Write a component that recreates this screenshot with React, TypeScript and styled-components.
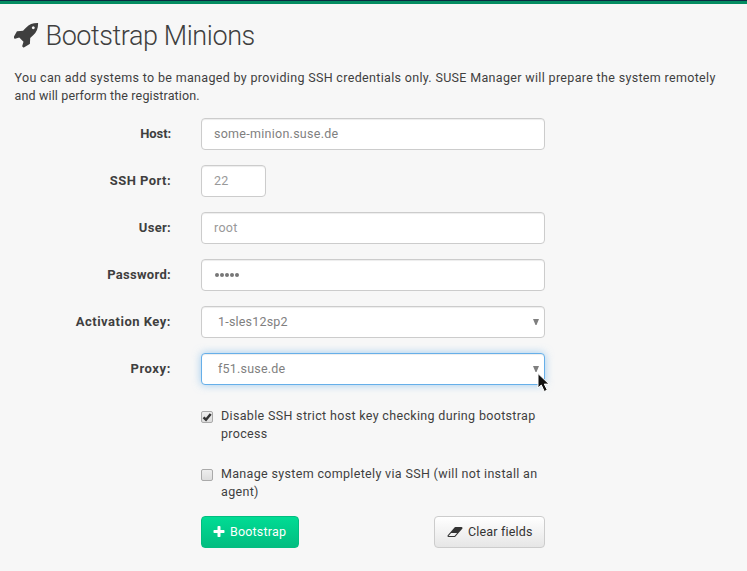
import React from 'react';
import styled, { createGlobalStyle, css } from 'styled-components';

const GlobalStyle = createGlobalStyle`
  * { box-sizing: border-box; }
  body {
    margin: 0;
    background: #f7f7f7;
    color: #3f3f3f;
    font: 12.5px/18px Roboto, "Liberation Sans", sans-serif;
    letter-spacing: 0.33px;
  }
`;

const Page = styled.div`
  position: relative;
  height: 571px;
  overflow: hidden;
  border-top: 1px solid #0b2c42;
`;
const Accent = styled.div`
  height: 3px;
  background: #048d62;
`;
const Content = styled.main`
  padding: 16px 14px 0;
`;
const Icon = styled.svg<{ $w: number; $h: number }>`
  display: block;
  flex: none;
  width: ${p => p.$w}px;
  height: ${p => p.$h}px;
  fill: currentColor;
`;
const Title = styled.h1`
  display: flex;
  align-items: center;
  gap: 4.5px;
  height: 30px;
  margin: 0 0 19px;
  padding-top: 1px;
  font-size: 27px;
  line-height: 30px;
  font-weight: 300;
  letter-spacing: -0.42px;
  ${Icon} { margin-top: -2px; }
`;
const Intro = styled.p`
  margin: 0 0 13px;
  padding-left: 0.5px;
  white-space: nowrap;
`;
const Tight = styled.span`
  letter-spacing: 0.14px;
`;
const Form = styled.form`
  display: grid;
  row-gap: 15px;
`;
const Row = styled.div`
  display: grid;
  grid-template-columns: 157px 344px;
  column-gap: 30px;
  align-items: center;
`;
const Label = styled.label<{ $track?: number }>`
  text-align: right;
  font-size: 13px;
  font-weight: 700;
  letter-spacing: ${p => p.$track ?? 0.3}px;
`;
const field = css`
  height: 32px;
  border: 1px solid #cccccc;
  border-radius: 4px;
  background: #fff;
  box-shadow: inset 0 1px 1px rgba(0, 0, 0, 0.075);
  font: inherit;
  letter-spacing: 0.27px;
  color: #7f7f7f;
`;
const Input = styled.input<{ $short?: boolean }>`
  ${field}
  width: ${p => (p.$short ? 65 : 344)}px;
  padding: 0 12px 1px;
  outline: none;
  &::placeholder { color: #999; opacity: 1; }
`;
const Dots = styled.div`
  ${field}
  display: flex;
  align-items: center;
  gap: 1px;
  padding: 0 13px;
`;
const Dot = styled.i`
  width: 4px;
  height: 4px;
  border-radius: 50%;
  background: #777;
`;
const Select = styled.div<{ $focus?: boolean }>`
  ${field}
  letter-spacing: 0.2px;
  display: flex;
  align-items: center;
  justify-content: space-between;
  padding: 0 5px 0 16px;
  ${p => p.$focus && css`
    border-color: #66afe9;
    box-shadow: inset 0 1px 1px rgba(0, 0, 0, 0.075), 0 0 8px rgba(102, 175, 233, 0.6);
  `}
`;
const Options = styled.div`
  width: 344px;
  margin: 22px 0 0 187px;
`;
const Check = styled.label`
  display: flex;
  gap: 8px;
  height: 36px;
  margin-bottom: 22px;
  white-space: nowrap;
`;
const Box = styled.span`
  display: grid;
  flex: none;
  place-items: center;
  width: 12px;
  height: 12px;
  margin-top: 4px;
  border: 1px solid #aaa;
  border-radius: 2px;
  background: linear-gradient(#eee, #ddd);
`;
const Actions = styled.div`
  display: flex;
  justify-content: space-between;
  margin-top: -7px;
`;
const Button = styled.button<{ $primary?: boolean }>`
  display: flex;
  align-items: center;
  gap: ${p => (p.$primary ? 4 : 5)}px;
  height: 32px;
  width: ${p => (p.$primary ? 98 : 111)}px;
  padding: 0 0 0 ${p => (p.$primary ? 10 : 12)}px;
  border: 1px solid ${p => (p.$primary ? '#02bd80' : '#ccc')};
  border-radius: 4px;
  background: ${p => (p.$primary ? 'linear-gradient(#00dc94, #02bd80)' : 'linear-gradient(#fff, #e6e6e6)')};
  color: ${p => (p.$primary ? '#fff' : '#333')};
  font: inherit;
  letter-spacing: 0.18px;
  white-space: nowrap;
`;
const Pointer = styled.svg`
  position: absolute;
  left: 537px;
  top: 371px;
`;

const Arrow = () => (
  <Icon $w={6} $h={6} viewBox="0 0 6 6"><path d="M0 0h6L3.5 6h-1z" /></Icon>
);

export default function App() {
  return (
    <Page>
      <GlobalStyle />
      <Accent />
      <Content>
        <Title>
          <Icon $w={27} $h={27} viewBox="64 0 1792 1792">
            <path d="M1440 448q0-40-28-68t-68-28-68 28-28 68 28 68 68 28 68-28 28-68zm224-288q0 249-75.500 430.500t-253.500 360.500q-81 80-195 176l-20 379q-2 16-16 26l-384 224q-7 4-16 4-12 0-23-9l-64-64q-13-14-8-32l85-276-281-281-276 85q-3 1-9 1-14 0-23-9l-64-64q-17-19-5-39l224-384q10-14 26-16l379-20q96-114 176-195 188-187 358-258t431-71q14 0 24 9.500t10 22.500z" />
          </Icon>
          Bootstrap Minions
        </Title>
        <Intro>
          You can add systems to be managed by providing SSH credentials only. SUSE Manager will prepare the system remotely
          <br /><Tight>and will perform the registration.</Tight>
        </Intro>
        <Form>
          <Row><Label $track={-0.1}>Host:</Label><Input defaultValue="some-minion.suse.de" /></Row>
          <Row><Label $track={0.45}>SSH Port:</Label><Input $short placeholder="22" /></Row>
          <Row><Label>User:</Label><Input placeholder="root" /></Row>
          <Row><Label>Password:</Label><Dots>{[0, 1, 2, 3, 4].map(i => <Dot key={i} />)}</Dots></Row>
          <Row><Label $track={0.5}>Activation Key:</Label><Select>1-sles12sp2<Arrow /></Select></Row>
          <Row><Label $track={0.6}>Proxy:</Label><Select $focus>f51.suse.de<Arrow /></Select></Row>
        </Form>
        <Options>
          <Check>
            <Box>
              <svg width="10" height="10" viewBox="0 0 10 10"><path d="M1.500 5.300 4 7.700 8.700 2" fill="none" stroke="#333" strokeWidth="2.500" /></svg>
            </Box>
            <span>Disable SSH strict host key checking during bootstrap<br />process</span>
          </Check>
          <Check>
            <Box />
            <span>Manage system completely via SSH (will not install an<br />agent)</span>
          </Check>
          <Actions>
            <Button $primary type="button">
              <Icon $w={14} $h={14} viewBox="0 0 1792 1792"><path d="M1600 736v192q0 40-28 68t-68 28h-416v416q0 40-28 68t-68 28h-192q-40 0-68-28t-28-68v-416h-416q-40 0-68-28t-28-68v-192q0-40 28-68t68-28h416v-416q0-40 28-68t68-28h192q40 0 68 28t28 68v416h416q40 0 68 28t28 68z" /></Icon>
              Bootstrap
            </Button>
            <Button type="button">
              <Icon $w={16} $h={14} viewBox="0 0 2048 1792"><path d="M960 1408l336-384h-768l-336 384h768zm1013-1077q15 34 9.500 71.500t-30.500 65.500l-896 1024q-38 44-96 44h-768q-38 0-69.500-20.500t-47.500-54.500q-15-34-9.500-71.500t30.500-65.500l896-1024q38-44 96-44h768q38 0 69.500 20.500t47.500 54.500z" /></Icon>
              Clear fields
            </Button>
          </Actions>
        </Options>
      </Content>
      <Pointer width="14" height="22" viewBox="0 0 14 22">
        <path d="M1 1.500V16l3.300-3 3 6.500 3-1.400-3-6H12z" fill="#111" stroke="#fff" strokeWidth="1" />
      </Pointer>
    </Page>
  );
}
